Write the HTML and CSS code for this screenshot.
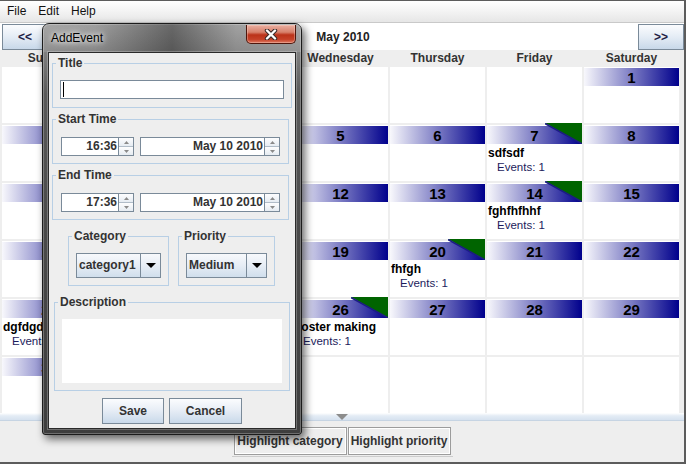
FILE: index.html
```html
<!DOCTYPE html>
<html>
<head>
<meta charset="utf-8">
<title>Calendar</title>
<link rel="stylesheet" href="styles.css">
</head>
<body>
<div class="window">
  <div class="menubar">
    <span class="menu">File</span><span class="menu">Edit</span><span class="menu">Help</span>
  </div>
  <div class="nav">
    <button class="navbtn">&lt;&lt;</button>
    <div class="month">May 2010</div>
    <button class="navbtn">&gt;&gt;</button>
  </div>
  <div class="daynames">
    <div>Sunday</div><div>Monday</div><div>Tuesday</div><div>Wednesday</div><div>Thursday</div><div>Friday</div><div>Saturday</div>
  </div>
  <div class="grid">
    <div class="cell"></div><div class="cell"></div><div class="cell"></div><div class="cell"></div><div class="cell"></div><div class="cell"></div>
    <div class="cell"><div class="hdr">1</div></div>

    <div class="cell"><div class="hdr sun">2</div></div>
    <div class="cell"><div class="hdr">3</div></div>
    <div class="cell"><div class="hdr">4</div></div>
    <div class="cell"><div class="hdr">5</div></div>
    <div class="cell"><div class="hdr">6</div></div>
    <div class="cell"><div class="hdr">7</div><svg class="flag" width="37" height="21" viewBox="0 0 37 21"><polygon points="0,0 37,0 37,21" fill="#006400"/><line x1="0" y1="0.5" x2="37" y2="21" stroke="#1c1c84" stroke-width="1.6"/></svg><div class="evt">sdfsdf</div><div class="cnt">Events: 1</div></div>
    <div class="cell"><div class="hdr">8</div></div>

    <div class="cell"><div class="hdr sun">9</div></div>
    <div class="cell"><div class="hdr">10</div></div>
    <div class="cell"><div class="hdr">11</div></div>
    <div class="cell"><div class="hdr">12</div></div>
    <div class="cell"><div class="hdr">13</div></div>
    <div class="cell"><div class="hdr">14</div><svg class="flag" width="37" height="21" viewBox="0 0 37 21"><polygon points="0,0 37,0 37,21" fill="#006400"/><line x1="0" y1="0.5" x2="37" y2="21" stroke="#1c1c84" stroke-width="1.6"/></svg><div class="evt">fghfhfhhf</div><div class="cnt">Events: 1</div></div>
    <div class="cell"><div class="hdr">15</div></div>

    <div class="cell"><div class="hdr sun">16</div></div>
    <div class="cell"><div class="hdr">17</div></div>
    <div class="cell"><div class="hdr">18</div></div>
    <div class="cell"><div class="hdr">19</div></div>
    <div class="cell"><div class="hdr">20</div><svg class="flag" width="37" height="21" viewBox="0 0 37 21"><polygon points="0,0 37,0 37,21" fill="#006400"/><line x1="0" y1="0.5" x2="37" y2="21" stroke="#1c1c84" stroke-width="1.6"/></svg><div class="evt">fhfgh</div><div class="cnt">Events: 1</div></div>
    <div class="cell"><div class="hdr">21</div></div>
    <div class="cell"><div class="hdr">22</div></div>

    <div class="cell"><div class="hdr sun">23</div><svg class="flag" width="37" height="21" viewBox="0 0 37 21"><polygon points="0,0 37,0 37,21" fill="#006400"/><line x1="0" y1="0.5" x2="37" y2="21" stroke="#1c1c84" stroke-width="1.6"/></svg><div class="evt">dgfdgdfgdfg</div><div class="cnt">Events: 1</div></div>
    <div class="cell"><div class="hdr">24</div></div>
    <div class="cell"><div class="hdr">25</div></div>
    <div class="cell"><div class="hdr">26</div><svg class="flag" width="37" height="21" viewBox="0 0 37 21"><polygon points="0,0 37,0 37,21" fill="#006400"/><line x1="0" y1="0.5" x2="37" y2="21" stroke="#1c1c84" stroke-width="1.6"/></svg><div class="evt">poster making</div><div class="cnt">Events: 1</div></div>
    <div class="cell"><div class="hdr">27</div></div>
    <div class="cell"><div class="hdr">28</div></div>
    <div class="cell"><div class="hdr">29</div></div>

    <div class="cell"><div class="hdr sun">30</div></div>
    <div class="cell"><div class="hdr">31</div></div>
    <div class="cell"></div><div class="cell"></div><div class="cell"></div><div class="cell"></div><div class="cell"></div>
  </div>
  <div class="divider"><span class="darrow"></span></div>
  <div class="actions">
    <div class="actgroup">
      <button class="actbtn">Highlight category</button><button class="actbtn">Highlight priority</button>
    </div>
  </div>

  <div class="dialog">
    <div class="titlebar">
      <span class="dtitle">AddEvent</span>
      <div class="close">
        <svg width="16" height="11" viewBox="0 0 16 11">
          <path d="M4 1.5 L12 9.5 M12 1.5 L4 9.5" stroke="#3a2a28" stroke-width="4.4" stroke-linecap="round"/>
          <path d="M4 1.5 L12 9.5 M12 1.5 L4 9.5" stroke="#ffffff" stroke-width="2.4" stroke-linecap="round"/>
        </svg>
      </div>
    </div>
    <div class="content">
      <fieldset class="grp g-title">
        <legend>Title</legend>
        <div class="txt"><span class="caret"></span></div>
      </fieldset>
      <fieldset class="grp g-time">
        <legend>Start Time</legend>
        <div class="timerow">
          <div class="spinner">
            <div class="field f-time">16:36</div>
            <div class="sp"><div class="sph"><svg width="5" height="3" viewBox="0 0 5 3"><polygon points="0,3 2.5,0 5,3" fill="#8a8a8a"/></svg></div><div class="sph"><svg width="5" height="3" viewBox="0 0 5 3"><polygon points="0,0 5,0 2.5,3" fill="#8a8a8a"/></svg></div></div>
          </div>
          <div class="spinner">
            <div class="field f-date">May 10 2010</div>
            <div class="sp"><div class="sph"><svg width="5" height="3" viewBox="0 0 5 3"><polygon points="0,3 2.5,0 5,3" fill="#8a8a8a"/></svg></div><div class="sph"><svg width="5" height="3" viewBox="0 0 5 3"><polygon points="0,0 5,0 2.5,3" fill="#8a8a8a"/></svg></div></div>
          </div>
        </div>
      </fieldset>
      <fieldset class="grp g-time">
        <legend>End Time</legend>
        <div class="timerow">
          <div class="spinner">
            <div class="field f-time">17:36</div>
            <div class="sp"><div class="sph"><svg width="5" height="3" viewBox="0 0 5 3"><polygon points="0,3 2.5,0 5,3" fill="#8a8a8a"/></svg></div><div class="sph"><svg width="5" height="3" viewBox="0 0 5 3"><polygon points="0,0 5,0 2.5,3" fill="#8a8a8a"/></svg></div></div>
          </div>
          <div class="spinner">
            <div class="field f-date">May 10 2010</div>
            <div class="sp"><div class="sph"><svg width="5" height="3" viewBox="0 0 5 3"><polygon points="0,3 2.5,0 5,3" fill="#8a8a8a"/></svg></div><div class="sph"><svg width="5" height="3" viewBox="0 0 5 3"><polygon points="0,0 5,0 2.5,3" fill="#8a8a8a"/></svg></div></div>
          </div>
        </div>
      </fieldset>
      <div class="comborow">
        <fieldset class="grp g-cat">
          <legend>Category</legend>
          <div class="combo c-cat"><span class="ctext">category1</span><span class="carrow"><svg width="10" height="5" viewBox="0 0 10 5"><polygon points="0,0 10,0 5,5" fill="#000"/></svg></span></div>
        </fieldset>
        <fieldset class="grp g-pri">
          <legend>Priority</legend>
          <div class="combo c-pri"><span class="ctext">Medium</span><span class="carrow"><svg width="10" height="5" viewBox="0 0 10 5"><polygon points="0,0 10,0 5,5" fill="#000"/></svg></span></div>
        </fieldset>
      </div>
      <fieldset class="grp g-desc">
        <legend>Description</legend>
        <div class="area"></div>
      </fieldset>
      <div class="dbtns">
        <button class="dbtn b-save">Save</button><button class="dbtn b-cancel">Cancel</button>
      </div>
    </div>
  </div>
</div>
</body>
</html>
```

FILE: styles.css
```css
html, body {
  margin: 0;
  padding: 0;
  background: #eeeeee;
}

.window {
  position: relative;
  width: 686px;
  height: 464px;
  box-sizing: border-box;
  border-top: 1px solid #5c5c5c;
  border-right: 2px solid #5c5c5c;
  border-bottom: 2px solid #5c5c5c;
  background: #eeeeee;
  font-family: "Liberation Sans", Arial, sans-serif;
  font-size: 12px;
  color: #333333;
  display: flex;
  flex-direction: column;
  overflow: hidden;
}

button {
  font-family: "Liberation Sans", Arial, sans-serif;
  margin: 0;
  padding: 0;
  cursor: default;
}

/* menu bar */
.menubar {
  height: 22px;
  box-sizing: border-box;
  border-bottom: 1px solid #c9c9c9;
  background: linear-gradient(#ffffff, #f3f3f3 50%, #e6e6e6);
  display: flex;
  align-items: center;
  padding-left: 1px;
}
.menu {
  padding: 0 6px;
  font-size: 12px;
  color: #111111;
  line-height: 21px;
}

/* navigation row */
.nav {
  height: 27px;
  box-sizing: border-box;
  background: #ffffff;
  display: flex;
  align-items: flex-start;
  padding: 1px 0 0 2px;
}
.navbtn {
  width: 46px;
  height: 26px;
  border: 1px solid #7a8a99;
  background: linear-gradient(#fbfcfe, #e4ecf5 50%, #c8d8e9);
  font-weight: bold;
  font-size: 12px;
  color: #222244;
}
.month {
  flex: 1;
  text-align: center;
  font-weight: bold;
  font-size: 12px;
  line-height: 26px;
  color: #222222;
}

/* day names */
.daynames {
  height: 17px;
  display: grid;
  grid-template-columns: repeat(7, 95px);
  column-gap: 2px;
  padding-left: 2px;
}
.daynames div {
  text-align: center;
  font-weight: bold;
  font-size: 12px;
  line-height: 17px;
  color: #333333;
}

/* month grid */
.grid {
  height: 346px;
  display: grid;
  grid-template-columns: repeat(7, 95px);
  grid-template-rows: repeat(6, 56px);
  gap: 2px;
  padding-left: 2px;
}
.cell {
  position: relative;
  background: #ffffff;
}
.hdr {
  margin-top: 1px;
  height: 18px;
  background: linear-gradient(to right, #f8f8fc, #00008c);
  text-align: center;
  font-weight: bold;
  font-size: 15px;
  line-height: 19px;
  color: #000000;
}
.hdr.sun {
  color: #c80000;
}
.flag {
  position: absolute;
  top: -2px;
  right: 0;
  display: block;
}
.evt {
  margin: 2px 0 0 1px;
  font-weight: bold;
  font-size: 12px;
  line-height: 14px;
  color: #000000;
  white-space: nowrap;
}
.cnt {
  padding-left: 10px;
  font-size: 11.5px;
  line-height: 15px;
  color: #1c1c5c;
  white-space: nowrap;
}

/* split divider */
.divider {
  height: 8px;
  box-sizing: border-box;
  background: linear-gradient(#ffffff, #e4ecf5 40%, #d6e2ef);
  border-bottom: 1px solid #c6d4e3;
  display: flex;
  justify-content: center;
  align-items: flex-end;
}
.darrow {
  width: 0;
  height: 0;
  border-left: 6px solid transparent;
  border-right: 6px solid transparent;
  border-top: 6px solid #8c8c8c;
  margin-bottom: 0;
}

/* bottom buttons */
.actions {
  height: 41px;
  display: flex;
  justify-content: center;
  align-items: flex-start;
  padding-top: 5px;
  box-sizing: border-box;
}
.actgroup {
  display: flex;
  gap: 1px;
  padding: 1px 2px 1px;
  border-bottom: 1px solid #cccccc;
}
.actbtn {
  height: 28px;
  border: 1px solid #9c9c9c;
  box-shadow: inset 0 0 0 1px #ffffff;
  background: #eeeeee;
  font-weight: bold;
  font-size: 12px;
  color: #333333;
}
.actbtn:first-child { width: 113px; }
.actbtn:last-child { width: 103px; }

/* dialog window */
.dialog {
  position: absolute;
  left: 42px;
  top: 22px;
  width: 260px;
  height: 412px;
  box-sizing: border-box;
  border: 1px solid #1c1c1c;
  border-radius: 7px 7px 3px 3px;
  padding: 0 5px 5px;
  background: linear-gradient(#9a9a9a, #7e7e7e 30px, #5a5a5a 70px, #4a4a4a 200px, #3e3e3e);
  box-shadow: inset 0 0 0 1px rgba(255,255,255,0.25), 3px 4px 9px rgba(0,0,0,0.6);
  display: flex;
  flex-direction: column;
}
.titlebar {
  height: 28px;
  display: flex;
  align-items: flex-start;
  background: linear-gradient(to right, rgba(255,255,255,0.12) 0%, rgba(255,255,255,0.05) 20%, rgba(0,0,0,0.32) 50%, rgba(255,255,255,0.08) 75%, rgba(255,255,255,0.15) 100%);
  margin: 0 -5px;
  padding: 0 5px;
}
.dtitle {
  margin-top: 7px;
  padding-left: 3px;
  font-size: 12px;
  line-height: 14px;
  color: #000000;
  text-shadow: 0 0 5px #ffffff, 0 0 9px rgba(255,255,255,0.9);
}
.close {
  margin-left: auto;
  margin-top: 1px;
  width: 50px;
  height: 19px;
  box-sizing: border-box;
  border: 1px solid #4e160c;
  border-top: none;
  border-radius: 0 0 5px 5px;
  background: linear-gradient(#eab0a2, #d7806b 40%, #bb3219 55%, #c54128 80%, #df7a62);
  box-shadow: inset 0 0 0 1px rgba(255,220,210,0.35);
  display: flex;
  align-items: center;
  justify-content: center;
}
.close svg { display: block; }

.content {
  flex: 1;
  border: 1px solid #2a2a2a;
  background: #eeeeee;
  display: flex;
  flex-direction: column;
  align-items: flex-start;
  box-shadow: 0 0 0 1px rgba(255,255,255,0.25);
}

.grp {
  margin: 0;
  border: 1px solid #b8cfe5;
  box-sizing: border-box;
  min-width: 0;
}
.grp legend {
  margin-left: -4px;
  padding: 0 2px;
  font-weight: bold;
  font-size: 12px;
  line-height: 14px;
  color: #333333;
}
.g-title {
  width: 240px;
  margin: 3px 0 0 3px;
  padding: 10px 7px 8px;
}
.txt {
  height: 19px;
  box-sizing: border-box;
  border: 1px solid #7a8a99;
  background: #ffffff;
  display: flex;
  align-items: center;
}
.caret {
  margin-left: 2px;
  width: 1px;
  height: 15px;
  background: #000000;
}
.g-time {
  width: 237px;
  margin: 4px 0 0 3px;
  padding: 11px 7px 7px 8px;
}
.g-time legend { margin-left: -5px; }
.timerow {
  display: flex;
  gap: 6px;
}
.spinner {
  display: flex;
  height: 19px;
}
.field {
  height: 19px;
  box-sizing: border-box;
  border: 1px solid #7a8a99;
  background: #ffffff;
  text-align: right;
  padding-right: 1px;
  font-weight: bold;
  font-size: 12px;
  line-height: 17px;
  color: #333333;
}
.f-time { width: 58px; }
.f-date { width: 125px; }
.sp {
  width: 15px;
  height: 19px;
  box-sizing: border-box;
  border: 1px solid #7a8a99;
  border-left: none;
  display: flex;
  flex-direction: column;
}
.sph {
  flex: 1;
  display: flex;
  align-items: center;
  justify-content: center;
  background: linear-gradient(#fdfdfe, #e6ecf2);
}
.sph + .sph { border-top: 1px solid #b0bcc8; }
.sph svg { display: block; }

.comborow {
  display: flex;
  gap: 9px;
  margin: 9px 0 0 19px;
}
.g-cat {
  width: 101px;
  padding: 10px 7px 7px;
}
.g-pri {
  width: 97px;
  padding: 10px 7px 7px;
}
.combo {
  height: 25px;
  box-sizing: border-box;
  border: 1px solid #7a8a99;
  background: linear-gradient(#f7f9fc, #e6edf5 50%, #d0deec);
  display: flex;
}
.c-cat { width: 85px; }
.c-pri { width: 81px; }
.ctext {
  flex: 1;
  padding-left: 2px;
  font-weight: bold;
  font-size: 12px;
  line-height: 23px;
  color: #333333;
  white-space: nowrap;
  overflow: hidden;
}
.carrow {
  width: 19px;
  border-left: 1px solid #7a8a99;
  display: flex;
  align-items: center;
  justify-content: center;
}
.carrow svg { display: block; }

.g-desc {
  width: 236px;
  margin: 9px 0 0 5px;
  padding: 10px 7px 7px;
}
.area {
  height: 64px;
  background: #ffffff;
}

.dbtns {
  align-self: center;
  display: flex;
  gap: 5px;
  margin-top: 7px;
}
.dbtn {
  height: 26px;
  border: 1px solid #7a8a99;
  background: linear-gradient(#fbfcfe, #e8eef6 45%, #c9d9ea);
  font-weight: bold;
  font-size: 12px;
  color: #333333;
}
.b-save { width: 62px; }
.b-cancel { width: 73px; }
```
